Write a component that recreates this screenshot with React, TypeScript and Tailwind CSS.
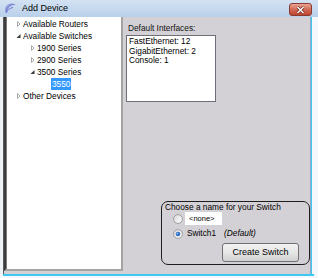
const TREE = [
  { label: "Available Routers", level: 0, open: false },
  { label: "Available Switches", level: 0, open: true },
  { label: "1900 Series", level: 1, open: false },
  { label: "2900 Series", level: 1, open: false },
  { label: "3500 Series", level: 1, open: true },
  { label: "3550", level: 2, leaf: true, selected: true },
  { label: "Other Devices", level: 0, open: false },
];

const INDENT = ["pl-[8px]", "pl-[22px]", "pl-[44px]"];

function Arrow({ open }: { open?: boolean }) {
  if (open) {
    return (
      <svg width="8" height="12" viewBox="0 0 8 12">
        <path d="M5.5 4 L5.5 8 L1.5 8 Z" fill="#3a3a3a" />
      </svg>
    );
  }
  return (
    <svg width="8" height="12" viewBox="0 0 8 12">
      <path d="M2.5 3.5 L5 6 L2.5 8.5 Z" fill="#fff" stroke="#a8a8a8" strokeWidth="1" />
    </svg>
  );
}

function Radio({ checked }: { checked?: boolean }) {
  return (
    <svg width="10" height="10" viewBox="0 0 10 10" className="shrink-0">
      <defs>
        <linearGradient id={checked ? "rg1" : "rg0"} x1="0" y1="0" x2="1" y2="1">
          <stop offset="0" stopColor="#d8d8d8" />
          <stop offset="1" stopColor="#ffffff" />
        </linearGradient>
      </defs>
      <circle cx="5" cy="5" r="4.4" fill={`url(#${checked ? "rg1" : "rg0"})`} stroke="#8e8f8f" strokeWidth="0.8" />
      {checked && <circle cx="5" cy="5" r="2.3" fill="#2f6fc4" />}
      {checked && <circle cx="4.4" cy="4.4" r="0.9" fill="#8fc0f0" />}
    </svg>
  );
}

export default function App() {
  return (
    <div className="w-[318px] h-[278px] flex flex-col overflow-hidden bg-[#f4f7fb] font-['Liberation_Sans',Arial,sans-serif] text-[8.3px] text-black">
      {/* title bar */}
      <div className="h-[17px] shrink-0 flex items-center bg-gradient-to-b from-[#d3e2f3] to-[#b9d0ea] pl-[3px] pr-[6px]">
        <svg width="14" height="13" viewBox="0 0 14 13">
          <defs>
            <linearGradient id="ic" x1="0" y1="0" x2="1" y2="1">
              <stop offset="0" stopColor="#a9b8f0" />
              <stop offset="1" stopColor="#3a3fa8" />
            </linearGradient>
          </defs>
          <path d="M3 11 C1 7 3 2 8 1.5 C11 1.3 12.5 3 12.5 3 C10 2.5 6.5 3.5 5 7 C4.4 8.6 4 10 3 11 Z" fill="url(#ic)" />
          <path d="M3 11 C5 7.5 7 6 10 5.5" stroke="#6c74d0" strokeWidth="1" fill="none" />
        </svg>
        <span className="ml-[5px] text-[9px]">Add Device</span>
        <div className="ml-auto w-[23px] h-[13px] mt-[2px] rounded-[3px] border border-[#8a3b2f] bg-gradient-to-b from-[#eaa595] via-[#d06a55] to-[#c0432e] flex items-center justify-center">
          <svg width="9" height="8" viewBox="0 0 9 8">
            <path d="M1.5 1 L7.5 7 M7.5 1 L1.5 7" stroke="#5a2018" strokeWidth="2.6" />
            <path d="M1.5 1 L7.5 7 M7.5 1 L1.5 7" stroke="#ffffff" strokeWidth="1.5" />
          </svg>
        </div>
      </div>

      {/* body */}
      <div className="flex h-[257px] shrink-0">
        <div className="w-[3px] bg-[#eef1f5]" />
        <div className="w-[1px] bg-[#5a5a5a]" />
        <div className="flex-1 flex bg-[#d4d1d6] border-r border-[#8fa9c6]">
          {/* tree column */}
          <div className="w-[119px] flex flex-col">
            <div className="h-[254px] flex border-l-[2px] border-l-[#3c3c3c] border-r-[2px] border-r-[#a3a3a3] border-b-[2px] border-b-[#a3a3a3]">
              <div className="flex-1 bg-white pt-[1px] border-l border-l-[#7a7a7a]">
                {TREE.map((n) => (
                  <div key={n.label} className={`h-[12px] flex items-center ${INDENT[n.level]}`}>
                    {!n.leaf && <Arrow open={n.open} />}
                    {n.selected ? (
                      <span className="h-[12px] leading-[12px] px-[1px] bg-[#3399ff] text-white">{n.label}</span>
                    ) : (
                      <span className="leading-[12px]">{n.label}</span>
                    )}
                  </div>
                ))}
              </div>
            </div>
          </div>

          {/* right panel */}
          <div className="flex-1 flex flex-col pl-[3px]">
            <div className="mt-[5px] h-[12px] leading-[12px] pl-[2px] text-[#111]">Default Interfaces:</div>
            <div className="mt-[1px] w-[90px] h-[67px] bg-white border border-[#6e6e78] pl-[2px] pt-[1px] leading-[9.5px]">
              <div>FastEthernet: 12</div>
              <div>GigabitEthernet: 2</div>
              <div>Console: 1</div>
            </div>

            <div className="mt-auto mb-[9px] ml-[35px] w-[149px] h-[64px] rounded-[7px] border-[1.5px] border-[#1e1e1e] flex flex-col pl-[3px]">
              <div className="leading-[10px]">Choose a name for your Switch</div>
              <div className="flex items-center h-[13px] pl-[8px]">
                <Radio />
                <div className="ml-[2px] w-[37px] h-[13px] bg-white flex items-center pl-[4px] text-[7.5px]">&lt;none&gt;</div>
              </div>
              <div className="mt-[3px] flex items-center h-[11px] pl-[8px]">
                <Radio checked />
                <span className="ml-[4px]">Switch1</span>
                <span className="ml-[8px] italic">(Default)</span>
              </div>
              <div className="mt-[4px] self-end mr-[10px] w-[77px] h-[19px] rounded-[3px] border border-[#707070] bg-gradient-to-b from-[#f2f2f2] via-[#e6e6e6] to-[#d0d0d0] flex items-center justify-center text-[9px]">
                Create Switch
              </div>
            </div>
          </div>
        </div>
        <div className="w-[1px] bg-[#3ec8f0]" />
        <div className="flex-1 bg-[#f4f7fb]" />
      </div>
      <div className="h-[2px] bg-[#3ec8f0] ml-[3px] mr-[4px]" />
    </div>
  );
}
